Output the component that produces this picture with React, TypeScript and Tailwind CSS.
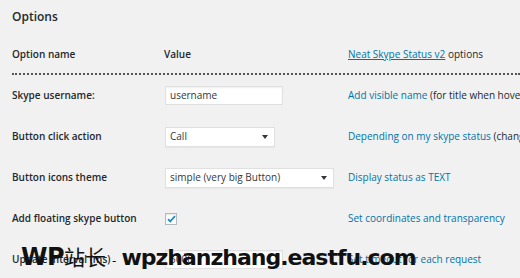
import React from 'react';

const rows = [
  {
    label: 'Skype username:',
    field: 'input',
    value: 'username',
    link: 'Add visible name',
    rest: ' (for title when hover on the button)',
  },
  {
    label: 'Button click action',
    field: 'select-sm',
    value: 'Call',
    link: 'Depending on my skype status',
    rest: ' (change the action)',
  },
  {
    label: 'Button icons theme',
    field: 'select-lg',
    value: 'simple (very big Button)',
    link: 'Display status as TEXT',
    rest: '',
  },
  {
    label: 'Add floating skype button',
    field: 'checkbox',
    value: '',
    link: 'Set coordinates and transparency',
    rest: '',
  },
  {
    label: 'Update interval (ms)',
    field: 'input',
    value: '5000',
    link: 'Set timeout for each request',
    rest: '',
  },
];

const Arrow = () => (
  <svg width="6" height="4" viewBox="0 0 6 4" className="shrink-0">
    <path d="M0 0h6L3 4z" fill="#32373c" />
  </svg>
);

const Field = ({ type, value }: { type: string; value: string }) => {
  if (type === 'checkbox') {
    return (
      <div className="w-[12px] h-[12px] mt-[1px] bg-white border border-[#b4b9be] shadow-[inset_0_1px_2px_rgba(0,0,0,0.1)] flex items-center justify-center">
        <svg width="9" height="8" viewBox="0 0 9 8">
          <path d="M1 4.2l2.2 2.2L8 1.2" stroke="#1e8cbe" strokeWidth="1.7" fill="none" />
        </svg>
      </div>
    );
  }
  if (type === 'input') {
    return (
      <div className="w-[118px] h-[19px] bg-white border border-[#e0e0e0] shadow-[inset_0_1px_2px_rgba(0,0,0,0.07)] px-[4px] flex items-center text-[10px] text-[#32373c]">
        {value}
      </div>
    );
  }
  const width = type === 'select-sm' ? 'w-[110px]' : 'w-[169px]';
  return (
    <div className={`${width} h-[20px] bg-white border border-[#e0e0e0] shadow-[0_1px_1px_rgba(0,0,0,0.04)] pl-[4px] pr-[6px] flex items-center justify-between text-[10px] text-[#32373c]`}>
      <span>{value}</span>
      <Arrow />
    </div>
  );
};

const App: React.FC = () => {
  return (
    <div
      className="relative w-[520px] h-[278px] overflow-hidden bg-[#f1f1f1] text-[#23282d]"
      style={{ fontFamily: '"Open Sans", "Noto Sans", sans-serif' }}
    >
      <div className="pl-[12px] pt-[8px] text-[12px] leading-[18px] font-semibold">Options</div>

      <div className="mt-[9px] ml-[12px] grid grid-cols-[152px_184px_1fr] h-[40px] items-center border-b-2 border-dotted border-[#555] text-[10px]">
        <div className="font-semibold">Option name</div>
        <div className="font-semibold">Value</div>
        <div className="whitespace-nowrap">
          <span className="text-[#0073aa] underline">Neat Skype Status v2</span> options
        </div>
      </div>

      {rows.map(row => (
        <div key={row.label} className="ml-[12px] grid grid-cols-[152px_184px_1fr] h-[41px] items-center text-[10px]">
          <div className="font-semibold whitespace-nowrap">{row.label}</div>
          <div className="pl-[1px]">
            <Field type={row.field} value={row.value} />
          </div>
          <div className="whitespace-nowrap overflow-hidden">
            <span className="text-[#0073aa]">{row.link}</span>
            {row.rest}
          </div>
        </div>
      ))}

      {/* watermark over the last row */}
      <div
        className="absolute left-[21px] top-[241px] flex items-baseline leading-[30px] text-[#111] whitespace-nowrap"
        style={{ fontFamily: '"DejaVu Sans", "Noto Sans CJK SC", sans-serif' }}
      >
        <span className="text-[24px] font-bold tracking-[-0.5px]">WP</span>
        <span className="text-[21px] font-normal" style={{ fontFamily: '"Noto Sans CJK SC", sans-serif' }}>站长</span>
        <span className="ml-[6px] text-[12px] font-normal">-</span>
        <span className="ml-[5px] text-[22px] font-bold tracking-[-1px]">wpzhanzhang.eastfu.com</span>
      </div>
    </div>
  );
};

export default App;
